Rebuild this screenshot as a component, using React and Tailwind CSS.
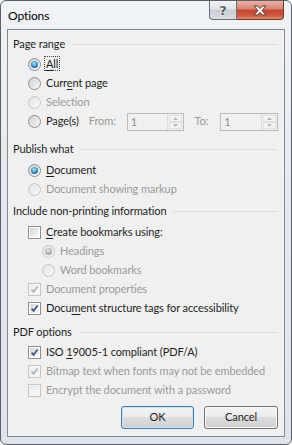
import React from 'react';

const Radio = ({ checked, disabled }) => (
  <span
    className={`flex w-[13px] h-[13px] shrink-0 items-center justify-center rounded-full border ${
      disabled
        ? 'border-[#c4c6c8] bg-[linear-gradient(135deg,#e4e4e4,#f9f9f9)]'
        : 'border-[#8e8f8f] bg-[linear-gradient(135deg,#cfcfcf,#fafafa)]'
    }`}
  >
    {checked && !disabled && (
      <span className="w-[7px] h-[7px] rounded-full bg-[radial-gradient(circle_at_45%_35%,#b6e6fb,#2b87c2_55%,#0e4f7f)]" />
    )}
    {checked && disabled && (
      <span className="w-[7px] h-[7px] rounded-full bg-[radial-gradient(circle_at_45%_35%,#e8e8e8,#a9a9a9_60%,#8c8c8c)]" />
    )}
  </span>
);

const Checkbox = ({ checked, disabled }) => (
  <span
    className={`flex w-[13px] h-[13px] shrink-0 items-center justify-center border p-px ${
      disabled ? 'border-[#c4c6c8] bg-[#f4f4f4]' : 'border-[#8e8f8f] bg-white'
    }`}
  >
    <span
      className={`relative w-full h-full ${
        disabled ? 'bg-[linear-gradient(135deg,#ececec,#f9f9f9)]' : 'bg-[linear-gradient(135deg,#d6d6d6,#fbfbfb)]'
      }`}
    >
      {checked && (
        <svg viewBox="0 0 9 9" className="absolute inset-0 w-full h-full">
          <path
            d="M1.6 4.6 L3.6 6.8 L7.6 1.4"
            fill="none"
            stroke={disabled ? '#b2b2b2' : '#3e5690'}
            strokeWidth="1.7"
          />
        </svg>
      )}
    </span>
  </span>
);

const U = ({ children }) => <span className="underline underline-offset-[2px] decoration-[1px]">{children}</span>;

const Header = ({ children, className = '' }) => (
  <div className={`flex h-[19px] items-center gap-[7px] text-[#1e1e1e] ${className}`}>
    <span className="whitespace-nowrap">{children}</span>
    <span className="flex-1 h-px bg-[#d5dfe5] mr-[1px]" />
  </div>
);

const Row = ({ indent = 'pl-[15px]', className = '', control, disabled, children }) => (
  <div className={`flex h-[19px] items-center gap-[5px] ${indent} ${className}`}>
    {control}
    <span className={`whitespace-nowrap ${disabled ? 'text-[#9a9a9a]' : 'text-[#1e1e1e]'}`}>{children}</span>
  </div>
);

const Spin = () => (
  <div className="flex h-[18px] w-[58px] border border-[#b9bcbf] bg-[#f0f0f0]">
    <span className="flex-1 pl-[3px] text-[#8d8d8d] leading-[16px]">1</span>
    <div className="flex w-[16px] flex-col border-l border-[#dcdcdc] p-px">
      <span className="flex flex-1 items-center justify-center border border-[#e0e0e0] bg-[#f4f4f4]">
        <svg width="5" height="3" viewBox="0 0 5 3"><path d="M0 3 L2.5 0 L5 3Z" fill="#b8b8b8" /></svg>
      </span>
      <span className="flex flex-1 items-center justify-center border border-[#e0e0e0] bg-[#f4f4f4]">
        <svg width="5" height="3" viewBox="0 0 5 3"><path d="M0 0 L2.5 3 L5 0Z" fill="#b8b8b8" /></svg>
      </span>
    </div>
  </div>
);

export default function App() {
  return (
    <div className="w-[292px] h-[445px] overflow-hidden bg-white font-['Segoe_UI','Lato',sans-serif] text-[11px] tracking-[-0.1px]">
      <div className="flex h-full flex-col rounded-[6px] border border-[#5b6068] bg-[linear-gradient(180deg,#f1f3f5,#e6eaee_40%,#dfe4e9)]">
        {/* Title bar */}
        <div className="flex h-[28px] shrink-0 items-start">
          <span className="pl-[7px] pt-[6px] text-[12px] tracking-[-0.1px] text-black">Options</span>
          <div className="ml-auto mr-[7px] flex">
            <div className="flex h-[19px] w-[28px] items-center justify-center rounded-bl-[4px] border border-t-0 border-[#6b7078] bg-[linear-gradient(180deg,#f0f2f4,#e1e5e9_45%,#c8cdd3_50%,#d8dde2)]">
              <span className="font-['DejaVu_Sans',sans-serif] text-[13px] font-bold leading-none text-[#5a5e63] [text-shadow:0_0_1px_#fff,0_0_2px_#fff]">?</span>
            </div>
            <div className="flex h-[19px] w-[47px] items-center justify-center rounded-br-[4px] border border-t-0 border-l-0 border-[#6b3a30] bg-[linear-gradient(180deg,#eab2a4,#d98270_45%,#c2432b_50%,#cf5a40_80%,#e08a6a)]">
              <svg width="14" height="11" viewBox="0 0 14 11">
                <path
                  d="M1 1 H4.5 L7 3.6 L9.5 1 H13 L9 5.5 L13 10 H9.5 L7 7.4 L4.5 10 H1 L5 5.5 Z"
                  fill="#ffffff"
                  stroke="#4b2a24"
                  strokeWidth="0.9"
                  strokeLinejoin="round"
                />
              </svg>
            </div>
          </div>
        </div>

        {/* Client area */}
        <div className="mx-[6px] flex flex-1 flex-col border border-[#838a91] bg-[#f0f0f0] pl-[5px] pr-[6px]">
          <Header className="mt-[5px]">Page range</Header>
          <Row className="mt-[1px]" control={<Radio checked />}>
            <span className="-mx-[2px] border border-dotted border-[#444] px-[1px] leading-[14px]"><U>A</U>ll</span>
          </Row>
          <Row control={<Radio />}>Curr<U>e</U>nt page</Row>
          <Row control={<Radio disabled />} disabled>Selection</Row>
          <div className="flex h-[19px] items-center pl-[15px]">
            <Radio />
            <span className="ml-[5px] w-[43px] text-[#1e1e1e]">Page(s)</span>
            <span className="w-[38px] text-[#9a9a9a]">From:</span>
            <Spin />
            <span className="ml-[10px] w-[26px] text-[#9a9a9a]">To:</span>
            <Spin />
          </div>

          <Header className="mt-[9px]">Publish what</Header>
          <Row className="mt-[2px]" control={<Radio checked />}><U>D</U>ocument</Row>
          <Row control={<Radio disabled />} disabled>Document showing markup</Row>

          <Header className="mt-[3px]">Include non-printing information</Header>
          <Row className="mt-[2px]" control={<Checkbox />}><U>C</U>reate bookmarks using:</Row>
          <Row indent="pl-[29px]" control={<Radio checked disabled />} disabled>Headings</Row>
          <Row indent="pl-[29px]" control={<Radio disabled />} disabled>Word bookmarks</Row>
          <Row control={<Checkbox checked disabled />} disabled>Document properties</Row>
          <Row control={<Checkbox checked />}>Docu<U>m</U>ent structure tags for accessibility</Row>

          <Header className="mt-[5px]">PDF options</Header>
          <Row className="mt-[1px]" control={<Checkbox checked />}>ISO <U>1</U>9005-1 compliant (PDF/A)</Row>
          <Row control={<Checkbox checked disabled />} disabled>Bitmap text when fonts may not be embedded</Row>
          <Row control={<Checkbox disabled />} disabled>Encrypt the document with a password</Row>

          <div className="mt-[6px] flex justify-end gap-[10px]">
            <button className="h-[23px] w-[73px] rounded-[3px] border border-[#3c7fb1] bg-[linear-gradient(180deg,#f3f3f3,#ebebeb_48%,#dddddd_50%,#cfcfcf)] text-[#1e1e1e] shadow-[inset_0_0_0_1px_#c4e5f6]">
              OK
            </button>
            <button className="h-[23px] w-[74px] rounded-[3px] border border-[#707070] bg-[linear-gradient(180deg,#f3f3f3,#ebebeb_48%,#dddddd_50%,#cfcfcf)] text-[#1e1e1e] shadow-[inset_0_0_0_1px_#fcfcfc]">
              Cancel
            </button>
          </div>
        </div>
        <div className="h-[7px] shrink-0" />
      </div>
    </div>
  );
}
